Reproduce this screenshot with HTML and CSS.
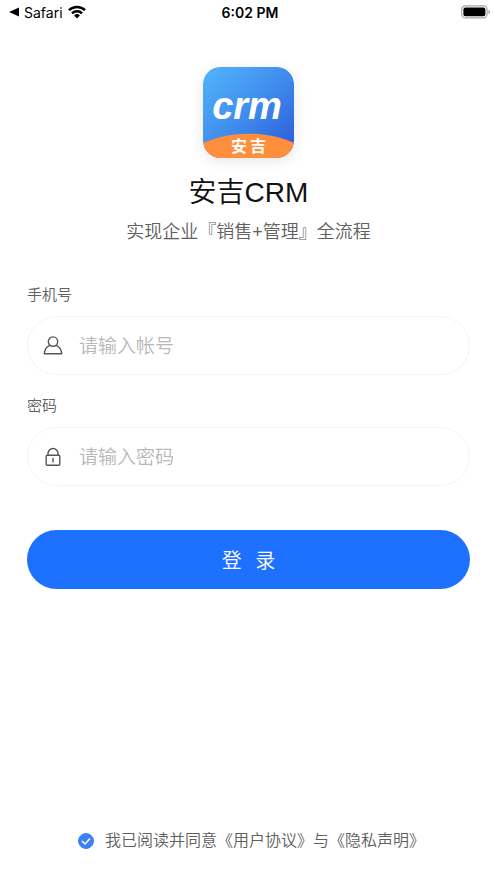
FILE: index.html
```html
<!DOCTYPE html>
<html lang="zh-CN">
<head>
<meta charset="utf-8">
<meta name="viewport" content="width=device-width, initial-scale=1">
<title>安吉CRM</title>
<link rel="stylesheet" href="styles.css">
</head>
<body>
<div class="screen">
  <header class="status">
    <a class="status-back" href="#">
      <svg width="10" height="10" viewBox="0 0 10 10" aria-hidden="true"><path d="M0 5 10 .5v9z"/></svg>
      <span>Safari</span>
      <svg width="18" height="14" viewBox="0 0 18 14" aria-hidden="true">
        <g fill="none" stroke="#000" stroke-width="2.5"><path d="M1 5.2a11.3 11.3 0 0 1 16 0"/><path d="M4 8.4a7 7 0 0 1 10 0"/></g>
        <path d="M9 13.4 6.1 10.5a4.1 4.1 0 0 1 5.8 0z"/>
      </svg>
    </a>
    <time class="status-time">6:02 PM</time>
    <svg class="battery" width="30" height="14" viewBox="0 0 30 14" aria-hidden="true">
      <rect x=".7" y=".9" width="25.4" height="12" rx="3.6" fill="none" stroke="#a6a6a6" stroke-width="1.2"/>
      <rect x="2.4" y="2.5" width="22" height="8.8" rx="2"/>
      <path d="M27.5 4.8c2 .7 2 3.6 0 4.3z" fill="#a6a6a6"/>
    </svg>
  </header>

  <main class="content">
    <div class="brand">
      <svg class="logo" width="91" height="91" viewBox="0 0 91 91" role="img" aria-label="安吉CRM">
        <defs>
          <linearGradient id="sky" x1="0" y1="0" x2="1" y2="1"><stop offset="0" stop-color="#52b5fb"/><stop offset=".5" stop-color="#408ced"/><stop offset=".9" stop-color="#2d62db"/></linearGradient>
          <clipPath id="tile"><rect width="91" height="91" rx="17"/></clipPath>
        </defs>
        <g clip-path="url(#tile)">
          <rect width="91" height="91" fill="url(#sky)"/>
          <path d="M0 76C27 63.5 64 63.5 91 76V91H0z" fill="#ff8e3d"/>
        </g>
        <text class="logo-word" x="44" y="52" text-anchor="middle">crm</text>
        <text class="logo-name" x="28" y="85">安</text>
        <text class="logo-name" x="47" y="85">吉</text>
      </svg>
      <h1 class="title">安吉CRM</h1>
      <p class="tagline">实现企业『销售+管理』全流程</p>
    </div>

    <form class="form" id="login">
      <label class="label" for="phone">手机号</label>
      <div class="field">
        <svg width="20" height="20" viewBox="0 0 20 20" aria-hidden="true" fill="none" stroke="#555" stroke-width="1.4" stroke-linejoin="round"><circle cx="10" cy="5.6" r="4.7"/><path d="M6.8 9.3C3.500 10.8 1.500 14 1.300 17.800H18.700C18.500 14 16.500 10.800 13.200 9.300"/></svg>
        <input id="phone" type="tel" placeholder="请输入帐号">
      </div>
      <label class="label" for="password">密码</label>
      <div class="field">
        <svg width="20" height="20" viewBox="0 0 20 20" aria-hidden="true" fill="none" stroke="#555" stroke-width="1.4"><rect x="3.200" y="8.300" width="13.600" height="10" rx="1"/><path d="M5 8.300V6.500a5 5 0 0 1 10 0v1.800M10 11v4.500"/></svg>
        <input id="password" type="password" placeholder="请输入密码">
      </div>
      <button class="submit" type="submit">登&nbsp;&nbsp;&nbsp;录</button>
    </form>
  </main>

  <footer class="agreement">
    <input id="agree" class="check" type="checkbox" form="login" checked>
    <label for="agree">我已阅读并同意<a href="#">《用户协议》</a>与<a href="#">《隐私声明》</a></label>
  </footer>
</div>
</body>
</html>
```
FILE: styles.css
```css
* {
  box-sizing: border-box;
}

body {
  margin: 0;
  background: #fff;
  color: #606060;
  font-family: "Liberation Sans", "Noto Sans CJK SC", sans-serif;
  font-weight: 350;
}

a {
  color: inherit;
  text-decoration: none;
}

.screen {
  display: flex;
  flex-direction: column;
  min-height: 100vh;
}

.status {
  display: grid;
  grid-template-columns: 1fr auto 1fr;
  align-items: center;
  height: 24px;
  padding: 0 6px 0 9px;
  color: #000;
  font-family: Inter, sans-serif;
  font-size: 14px;
  font-weight: 400;
}

.status-back {
  display: flex;
  align-items: center;
  gap: 5px;
}

.status-time {
  font-weight: 600;
}

.battery {
  justify-self: end;
}

.content {
  padding: 43px 27px 24px;
}

.brand {
  display: flex;
  flex-direction: column;
  align-items: center;
}

.logo {
  border-radius: 17px;
  box-shadow: 0 3px 14px rgba(0, 0, 0, 0.1);
}

.logo-word {
  fill: #fff;
  font: italic 700 38px "Liberation Sans", sans-serif;
}

.logo-name {
  fill: #fff;
  font: 700 16px "Noto Sans CJK SC", sans-serif;
}

.title {
  margin: 15px 0 0;
  color: #111;
  font-size: 28px;
  font-weight: 350;
  line-height: 40px;
}

.tagline {
  margin: 6px 0 0;
  font-size: 18px;
  line-height: 26px;
}

.form {
  display: flex;
  flex-direction: column;
  margin-top: 39px;
}

.label {
  margin-bottom: 10px;
  font-size: 15px;
  line-height: 22px;
}

.field {
  display: flex;
  align-items: center;
  gap: 16px;
  height: 59px;
  margin-bottom: 20px;
  padding: 0 15px;
  border: 1px solid #f3f3f3;
  border-radius: 30px;
}

.field input {
  flex: 1;
  min-width: 0;
  height: 40px;
  padding: 2px 0 0;
  border: 0;
  outline: 0;
  background: transparent;
  color: #333;
  font: inherit;
  font-size: 19px;
}

.field input::placeholder {
  color: #b8b8b8;
}

.submit {
  height: 59px;
  margin-top: 24px;
  border: 0;
  border-radius: 30px;
  background: #1e70ff;
  color: #fff;
  font-family: "Noto Sans CJK SC", sans-serif;
  font-size: 20px;
  font-weight: 350;
}

.agreement {
  display: flex;
  align-items: center;
  justify-content: center;
  gap: 11px;
  margin-top: auto;
  padding: 0 0 30px 6px;
  font-size: 16px;
  line-height: 24px;
}

.check {
  appearance: none;
  width: 16px;
  height: 16px;
  margin: 0;
  border: 1px solid #3b82f6;
  border-radius: 50%;
}

.check:checked {
  background: #3b82f6 url("data:image/svg+xml,%3Csvg xmlns='http://www.w3.org/2000/svg' viewBox='0 0 16 16'%3E%3Cpath d='M4 8l3 3 5-5.5' fill='none' stroke='white' stroke-width='1.5'/%3E%3C/svg%3E") center / 16px no-repeat;
}
```
